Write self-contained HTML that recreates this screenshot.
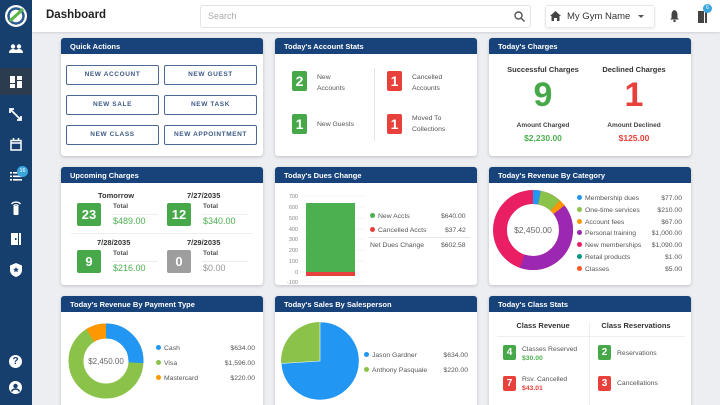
<!DOCTYPE html>
<html style="width:720px;height:405px;overflow:hidden"><head><meta charset="utf-8"><style>
*{box-sizing:border-box;margin:0;padding:0}
body{width:720px;height:405px;overflow:hidden;background:#eceef1;font-family:"Liberation Sans",sans-serif;position:relative;color:#333}
.a{position:absolute}
.side{left:0;top:0;width:32px;height:405px;background:#173f6e}
.top{left:32px;top:0;width:688px;height:32px;background:#fff;box-shadow:0 1px 2px rgba(0,0,0,.12)}
.card{position:absolute;background:#fff;border-radius:3px;box-shadow:0 1px 3px rgba(0,0,0,.2);overflow:hidden}
.hd{height:16px;background:#17427a;color:#fff;font-size:7.5px;font-weight:bold;padding:4px 9px}
.btn{position:absolute;width:93px;height:20px;border:1px solid #4a6a93;border-radius:2px;color:#3d5a85;font-size:6.5px;font-weight:bold;letter-spacing:.6px;text-align:center;line-height:18px}
.bx{position:absolute;color:#fff;font-weight:bold;text-align:center;border-radius:2px}
.g{background:#46a849}.r{background:#e8403a}.gr{background:#9e9e9e}
.t{position:absolute;font-size:6.8px;color:#555;white-space:nowrap}
.dot{display:inline-block;width:5px;height:5px;border-radius:50%;margin-right:3px;vertical-align:0}
</style></head><body>
<div class="a side"></div>
<div class="a" style="left:0;top:68px;width:32px;height:27px;background:#2c3c4f"></div>
<svg class="a" style="left:4px;top:4px" width="24" height="24" viewBox="0 0 24 24"><circle cx="12" cy="12" r="11" fill="#fff"/><circle cx="12" cy="12" r="7.5" fill="none" stroke="#2a5d8f" stroke-width="2.5"/><path d="M6 17 L19 5" stroke="#5bb548" stroke-width="3"/></svg>
<svg class="a" style="left:9px;top:44px" width="14" height="10" viewBox="0 0 14 10" fill="#fff"><circle cx="4" cy="2.5" r="2.2"/><circle cx="10" cy="2.5" r="2.2"/><path d="M0 9c0-3 2-4 4-4s4 1 4 4zM6 9c0-3 2-4 4-4s4 1 4 4z"/></svg>
<svg class="a" style="left:10px;top:76px" width="12" height="12" viewBox="0 0 12 12" fill="#fff"><rect x="0" y="0" width="5" height="7"/><rect x="7" y="0" width="5" height="4"/><rect x="0" y="8" width="5" height="4"/><rect x="7" y="5" width="5" height="7"/></svg>
<svg class="a" style="left:9px;top:108px" width="13" height="13" viewBox="0 0 13 13" stroke="#fff" stroke-width="1.8" fill="none"><path d="M2 2L11 11M1 5V1h4M12 8v4H8"/></svg>
<svg class="a" style="left:10px;top:138px" width="12" height="13" viewBox="0 0 12 13" fill="none" stroke="#fff" stroke-width="1.5"><rect x="1" y="2.5" width="10" height="9.5"/><path d="M1 5h10M3.5 0v3M8.5 0v3"/></svg>
<svg class="a" style="left:10px;top:172px" width="12" height="9" viewBox="0 0 12 9" fill="#fff"><rect x="0" y="0" width="2" height="1.6"/><rect x="3" y="0" width="9" height="1.6"/><rect x="0" y="3.5" width="2" height="1.6"/><rect x="3" y="3.5" width="9" height="1.6"/><rect x="0" y="7" width="2" height="1.6"/><rect x="3" y="7" width="9" height="1.6"/></svg>
<div class="a" style="left:17px;top:166px;width:11px;height:11px;border-radius:50%;background:#3aa6de;color:#fff;font-size:5.5px;text-align:center;line-height:11px">16</div>
<svg class="a" style="left:11px;top:200px" width="10" height="15" viewBox="0 0 10 15" fill="#fff"><rect x="2.5" y="6" width="5" height="9" rx="1"/><path d="M0 3.5a7 7 0 0 1 10 0l-1 1a5.5 5.5 0 0 0-8 0zM2 5.5a4 4 0 0 1 6 0l-1 1a2.5 2.5 0 0 0-4 0z"/></svg>
<svg class="a" style="left:10px;top:233px" width="12" height="12" viewBox="0 0 12 12" fill="#fff"><path d="M1 0h7v12H1zM9 0h2v12h-2z"/><rect x="5" y="5" width="1.5" height="2" fill="#173f6e"/></svg>
<svg class="a" style="left:10px;top:263px" width="12" height="14" viewBox="0 0 12 14" fill="#fff"><path d="M6 0L12 2.5V7c0 3.5-2.5 6-6 7-3.5-1-6-3.5-6-7V2.5z"/><path d="M6 4l.8 1.8 2 .2-1.5 1.3.5 2L6 8.3 4.2 9.3l.5-2L3.2 6l2-.2z" fill="#173f6e"/></svg>
<div class="a" style="left:9px;top:355px;width:13px;height:13px;border-radius:50%;background:#fff;color:#173f6e;font-size:10px;font-weight:bold;text-align:center;line-height:13px">?</div>
<svg class="a" style="left:9px;top:381px" width="13" height="13" viewBox="0 0 13 13"><circle cx="6.5" cy="6.5" r="6.5" fill="#fff"/><circle cx="6.5" cy="5" r="2.2" fill="#173f6e"/><path d="M2.5 10.5c1-2 2.5-2.5 4-2.5s3 .5 4 2.5" stroke="#173f6e" stroke-width="1.6" fill="none"/></svg>

<div class="a top"></div>
<div class="a" style="left:46px;top:9px;font-size:11.5px;font-weight:bold;color:#222">Dashboard</div>
<div class="a" style="left:200px;top:5px;width:331px;height:23px;border:1px solid #e3e3e3;border-radius:3px"></div>
<div class="a" style="left:208px;top:11px;font-size:9px;color:#aaa">Search</div>
<svg class="a" style="left:514px;top:11px" width="11" height="11" viewBox="0 0 11 11" fill="none" stroke="#555" stroke-width="1.4"><circle cx="4.5" cy="4.5" r="3.5"/><path d="M7 7l3.5 3.5"/></svg>
<div class="a" style="left:545px;top:5px;width:110px;height:23px;border:1px solid #e8e8e8;border-radius:3px;box-shadow:0 1px 2px rgba(0,0,0,.08)"></div>
<svg class="a" style="left:550px;top:11px" width="11" height="10" viewBox="0 0 11 10" fill="#444"><path d="M5.5 0L11 5H9.5v5H7V7H4v3H1.5V5H0z"/></svg>
<div class="a" style="left:567px;top:11px;font-size:9.5px;color:#333">My Gym Name</div>
<svg class="a" style="left:638px;top:15px" width="6" height="4"><path d="M0 0h6L3 3z" fill="#555"/></svg>
<svg class="a" style="left:669px;top:10px" width="11" height="12" viewBox="0 0 11 12" fill="#444"><path d="M5.5 0C8 1 8.5 3 8.5 5v3l1.5 1.5H1L2.5 8V5C2.5 3 3 1 5.5 0z"/><circle cx="5.5" cy="11" r="1.2"/></svg>
<svg class="a" style="left:697px;top:10px" width="11" height="13" viewBox="0 0 11 13" fill="#444"><path d="M1 1h6v12H1zM8 1h2v12H8z"/></svg>
<div class="a" style="left:703px;top:4px;width:9px;height:9px;border-radius:50%;background:#3aa6de;color:#fff;font-size:5px;text-align:center;line-height:9px">6</div>

<div class="card" style="left:61px;top:38px;width:202px;height:118px"><div class="hd">Quick Actions</div>
<div class="btn" style="left:5px;top:27px">NEW ACCOUNT</div><div class="btn" style="left:103px;top:27px">NEW GUEST</div>
<div class="btn" style="left:5px;top:57px">NEW SALE</div><div class="btn" style="left:103px;top:57px">NEW TASK</div>
<div class="btn" style="left:5px;top:87px">NEW CLASS</div><div class="btn" style="left:103px;top:87px">NEW APPOINTMENT</div>
</div>

<div class="card" style="left:275px;top:38px;width:202px;height:118px"><div class="hd">Today's Account Stats</div>
<div class="bx g" style="left:17px;top:33px;width:15px;height:20px;font-size:14px;line-height:20px">2</div>
<div class="t" style="left:42px;top:34px;line-height:11px">New<br>Accounts</div>
<div class="bx g" style="left:17px;top:76px;width:15px;height:20px;font-size:14px;line-height:20px">1</div>
<div class="t" style="left:42px;top:83px">New Guests</div>
<div class="a" style="left:99px;top:30px;width:1px;height:73px;background:#e5e5e5"></div>
<div class="bx r" style="left:112px;top:33px;width:15px;height:20px;font-size:14px;line-height:20px">1</div>
<div class="t" style="left:137px;top:34px;line-height:11px">Cancelled<br>Accounts</div>
<div class="bx r" style="left:112px;top:76px;width:15px;height:20px;font-size:14px;line-height:20px">1</div>
<div class="t" style="left:137px;top:75px;line-height:11px">Moved To<br>Collections</div>
</div>

<div class="card" style="left:489px;top:38px;width:202px;height:118px"><div class="hd">Today's Charges</div>
<div class="t" style="left:0;width:108px;text-align:center;top:27px;font-size:7.5px;font-weight:bold;color:#333">Successful Charges</div>
<div class="t" style="left:95px;width:100px;text-align:center;top:27px;font-size:7.5px;font-weight:bold;color:#333">Declined Charges</div>
<div class="t" style="left:0;width:108px;text-align:center;top:38px;font-size:34px;font-weight:bold;color:#46a849">9</div>
<div class="t" style="left:95px;width:100px;text-align:center;top:38px;font-size:34px;font-weight:bold;color:#e8403a">1</div>
<div class="t" style="left:0;width:108px;text-align:center;top:84px;font-size:6.5px;font-weight:bold;color:#444">Amount Charged</div>
<div class="t" style="left:95px;width:100px;text-align:center;top:84px;font-size:6.5px;font-weight:bold;color:#444">Amount Declined</div>
<div class="t" style="left:0;width:108px;text-align:center;top:95px;font-size:8.5px;font-weight:bold;color:#4caf50">$2,230.00</div>
<div class="t" style="left:95px;width:100px;text-align:center;top:95px;font-size:8.5px;font-weight:bold;color:#e8403a">$125.00</div>
</div>

<div class="card" style="left:61px;top:167px;width:202px;height:118px"><div class="hd">Upcoming Charges</div>
<div class="t" style="left:37px;top:24px;font-size:7.5px;font-weight:bold;color:#333">Tomorrow</div>
<div class="t" style="left:126px;top:24px;font-size:7.5px;font-weight:bold;color:#333">7/27/2035</div>
<div class="bx g" style="left:16px;top:36px;width:24px;height:23px;font-size:13px;line-height:23px">23</div>
<div class="t" style="left:52px;top:36px;font-size:6.5px;font-weight:bold">Total</div>
<div class="a" style="left:51px;top:47px;width:46px;height:1px;background:#eee"></div>
<div class="t" style="left:52px;top:49px;font-size:9px;color:#4caf50">$489.00</div>
<div class="bx g" style="left:106px;top:36px;width:24px;height:23px;font-size:13px;line-height:23px">12</div>
<div class="t" style="left:142px;top:36px;font-size:6.5px;font-weight:bold">Total</div>
<div class="a" style="left:141px;top:47px;width:46px;height:1px;background:#eee"></div>
<div class="t" style="left:142px;top:49px;font-size:9px;color:#4caf50">$340.00</div>
<div class="a" style="left:10px;top:66px;width:182px;height:1px;background:#eee"></div>
<div class="t" style="left:36px;top:71px;font-size:7.5px;font-weight:bold;color:#333">7/28/2035</div>
<div class="t" style="left:126px;top:71px;font-size:7.5px;font-weight:bold;color:#333">7/29/2035</div>
<div class="bx g" style="left:16px;top:83px;width:24px;height:23px;font-size:13px;line-height:23px">9</div>
<div class="t" style="left:52px;top:83px;font-size:6.5px;font-weight:bold">Total</div>
<div class="a" style="left:51px;top:94px;width:46px;height:1px;background:#eee"></div>
<div class="t" style="left:52px;top:96px;font-size:9px;color:#4caf50">$216.00</div>
<div class="bx gr" style="left:106px;top:83px;width:24px;height:23px;font-size:13px;line-height:23px">0</div>
<div class="t" style="left:142px;top:83px;font-size:6.5px;font-weight:bold">Total</div>
<div class="a" style="left:141px;top:94px;width:46px;height:1px;background:#eee"></div>
<div class="t" style="left:142px;top:96px;font-size:9px;color:#999">$0.00</div>
</div>

<div class="card" style="left:275px;top:167px;width:202px;height:118px"><div class="hd">Today's Dues Change</div>
<svg class="a" style="left:0;top:16px" width="202" height="102" viewBox="0 0 202 102">
<g font-size="5.5" fill="#888" font-family="Liberation Sans" text-anchor="end">
<text x="23" y="15">700</text><text x="23" y="26">600</text><text x="23" y="37">500</text><text x="23" y="48">400</text><text x="23" y="58">300</text><text x="23" y="69">200</text><text x="23" y="80">100</text><text x="23" y="91">0</text><text x="23" y="101">-100</text></g>
<g stroke="#eee" stroke-width=".6"><path d="M25 13H90M25 24H90M25 35H90M25 46H90M25 56H90M25 67H90M25 78H90M25 89H90M25 99H90"/></g>
<rect x="31" y="20" width="49" height="69" fill="#4caf50"/><rect x="31" y="89" width="49" height="4" fill="#e8403a"/>
</svg>
<div class="t" style="left:95px;top:46px"><span class="dot" style="background:#4caf50"></span>New Accts</div>
<div class="t" style="left:166px;top:46px">$640.00</div>
<div class="t" style="left:95px;top:60px"><span class="dot" style="background:#e8403a"></span>Cancelled Accts</div>
<div class="t" style="left:170px;top:60px">$37.42</div>
<div class="a" style="left:94px;top:70px;width:101px;height:1px;background:#e5e5e5"></div>
<div class="t" style="left:95px;top:75px">Net Dues Change</div>
<div class="t" style="left:166px;top:75px">$602.58</div>
</div>

<div class="card" style="left:489px;top:167px;width:202px;height:118px"><div class="hd">Today's Revenue By Category</div>
<svg class="a" style="left:4px;top:23px" width="80" height="80" viewBox="0 0 80 80">
<g transform="rotate(-90 40 40)" fill="none" stroke-width="14">
<circle cx="40" cy="40" r="33" stroke="#e91e63"/>
<circle cx="40" cy="40" r="33" stroke="#2196f3" stroke-dasharray="6.5 300" stroke-dashoffset="0"/>
<circle cx="40" cy="40" r="33" stroke="#8bc34a" stroke-dasharray="17.8 300" stroke-dashoffset="-6.5"/>
<circle cx="40" cy="40" r="33" stroke="#ff9800" stroke-dasharray="5.7 300" stroke-dashoffset="-24.3"/>
<circle cx="40" cy="40" r="33" stroke="#9c27b0" stroke-dasharray="84.6 300" stroke-dashoffset="-30"/>
</g>
<text x="40" y="43" text-anchor="middle" font-size="8.5" fill="#666" font-family="Liberation Sans">$2,450.00</text></svg>
<div class="t" style="left:88px;top:26px;line-height:11.8px"><span class="dot" style="background:#2196f3"></span>Membership dues<br><span class="dot" style="background:#8bc34a"></span>One-time services<br><span class="dot" style="background:#ff9800"></span>Account fees<br><span class="dot" style="background:#9c27b0"></span>Personal training<br><span class="dot" style="background:#e91e63"></span>New memberships<br><span class="dot" style="background:#009688"></span>Retail products<br><span class="dot" style="background:#ff5722"></span>Classes</div>
<div class="t" style="left:150px;width:43px;text-align:right;top:26px;line-height:11.8px">$77.00<br>$210.00<br>$67.00<br>$1,000.00<br>$1,090.00<br>$1.00<br>$5.00</div>
</div>

<div class="card" style="left:61px;top:296px;width:202px;height:118px"><div class="hd">Today's Revenue By Payment Type</div>
<svg class="a" style="left:5px;top:25px" width="80" height="80" viewBox="0 0 80 80">
<g transform="rotate(-90 40 40)" fill="none" stroke-width="15">
<circle cx="40" cy="40" r="30" stroke="#8bc34a"/>
<circle cx="40" cy="40" r="30" stroke="#2196f3" stroke-dasharray="48.8 300"/>
<circle cx="40" cy="40" r="30" stroke="#ff9800" stroke-dasharray="16.9 300" stroke-dashoffset="-171.6"/>
</g>
<text x="40" y="43" text-anchor="middle" font-size="8" fill="#666" font-family="Liberation Sans">$2,450.00</text></svg>
<div class="t" style="left:95px;top:46px;line-height:14.8px"><span class="dot" style="background:#2196f3"></span>Cash<br><span class="dot" style="background:#8bc34a"></span>Visa<br><span class="dot" style="background:#ff9800"></span>Mastercard</div>
<div class="t" style="left:150px;width:44px;text-align:right;top:46px;line-height:14.8px">$634.00<br>$1,596.00<br>$220.00</div>
</div>

<div class="card" style="left:275px;top:296px;width:202px;height:118px"><div class="hd">Today's Sales By Salesperson</div>
<svg class="a" style="left:5px;top:25px" width="80" height="80" viewBox="0 0 80 80">
<circle cx="40" cy="40" r="39" fill="#8bc34a"/>
<path d="M40 40V1A39 39 0 1 1 1.2 42.5Z" fill="#2196f3" stroke="#fff" stroke-width=".6"/></svg>
<div class="t" style="left:89px;top:53px;line-height:14.8px"><span class="dot" style="background:#2196f3"></span>Jason Gardner<br><span class="dot" style="background:#8bc34a"></span>Anthony Pasquale</div>
<div class="t" style="left:155px;width:38px;text-align:right;top:53px;line-height:14.8px">$634.00<br>$220.00</div>
</div>

<div class="card" style="left:489px;top:296px;width:202px;height:118px"><div class="hd">Today's Class Stats</div>
<div class="t" style="left:14px;width:80px;text-align:center;top:25px;font-size:7.5px;font-weight:bold;color:#333">Class Revenue</div>
<div class="t" style="left:104px;width:86px;text-align:center;top:25px;font-size:7.5px;font-weight:bold;color:#333">Class Reservations</div>
<div class="a" style="left:8px;top:40px;width:188px;height:1px;background:#eee"></div>
<div class="a" style="left:100px;top:26px;width:1px;height:90px;background:#eee"></div>
<div class="bx g" style="left:14px;top:49px;width:13px;height:15px;font-size:10px;line-height:15px">4</div>
<div class="t" style="left:33px;top:50px">Classes Reserved</div>
<div class="t" style="left:33px;top:59px;color:#4caf50;font-weight:bold">$30.00</div>
<div class="bx r" style="left:14px;top:80px;width:13px;height:15px;font-size:10px;line-height:15px">7</div>
<div class="t" style="left:33px;top:80px">Rsv. Cancelled</div>
<div class="t" style="left:33px;top:89px;color:#e8403a;font-weight:bold">$43.01</div>
<div class="bx g" style="left:109px;top:49px;width:13px;height:15px;font-size:10px;line-height:15px">2</div>
<div class="t" style="left:128px;top:54px">Reservations</div>
<div class="bx r" style="left:109px;top:80px;width:13px;height:15px;font-size:10px;line-height:15px">3</div>
<div class="t" style="left:128px;top:84px">Cancellations</div>
</div>
</body></html>
